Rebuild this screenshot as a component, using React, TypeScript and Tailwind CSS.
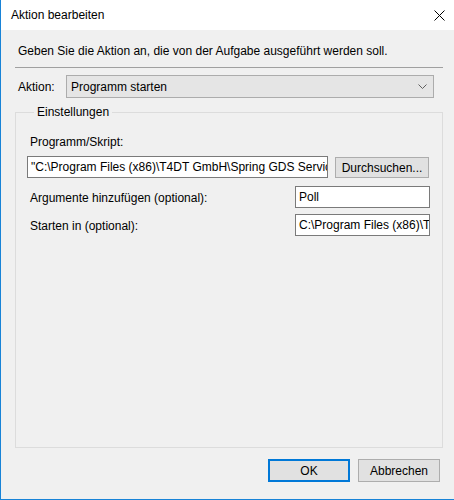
import React from 'react'

const font = { fontFamily: '"Segoe UI", "Liberation Sans", Arial, sans-serif' }

function TextBox({ value, className }: { value: string; className: string }) {
  return (
    <div
      className={`h-[22px] border border-[#7a7a7a] bg-white pl-[3px] flex items-center overflow-hidden whitespace-nowrap text-[12px] text-black ${className}`}
    >
      {value}
    </div>
  )
}

export default function App() {
  return (
    <div
      className="w-[454px] h-[500px] bg-[#f0f0f0] border-l border-b border-[#1883d7] flex flex-col text-[12px] leading-[16px] text-black"
      style={font}
    >
      {/* Title bar */}
      <div className="h-[30px] bg-white flex items-center justify-between pl-[10px] pr-[8px] shrink-0">
        <span className="text-[12px]">Aktion bearbeiten</span>
        <svg width="11" height="11" viewBox="0 0 11 11" className="mr-[1px]">
          <path d="M0.5 0.5 L10.5 10.5 M10.5 0.5 L0.5 10.5" stroke="#000" strokeWidth="1" fill="none" />
        </svg>
      </div>

      <div className="flex-1 flex flex-col pl-[14px] pr-[11px]">
        <div className="mt-[13px] ml-[3px]">Geben Sie die Aktion an, die von der Aufgabe ausgeführt werden soll.</div>

        <div className="mt-[8px] h-[1px] bg-[#a0a0a0]" />

        <div className="mt-[7px] flex items-center">
          <span className="ml-[3px] w-[48px]">Aktion:</span>
          <div className="w-[368px] h-[23px] bg-[#e5e5e5] border border-[#acacac] flex items-center justify-between pl-[4px] pr-[6px]">
            <span>Programm starten</span>
            <svg width="9" height="5" viewBox="0 0 9 5">
              <path d="M0.5 0.5 L4.5 4.5 L8.5 0.5" stroke="#606060" strokeWidth="1" fill="none" />
            </svg>
          </div>
        </div>

        <fieldset className="mt-[6px] h-[344px] border border-[#dcdcdc] px-[11px]">
          <legend className="ml-[7px] px-[3px]">Einstellungen</legend>

          <div className="mt-[14px] ml-[3px]">Programm/Skript:</div>
          <div className="mt-[6px] flex items-end">
            <TextBox className="w-[301px]" value={'"C:\\Program Files (x86)\\T4DT GmbH\\Spring GDS Service\\SpringGDSService.exe"'} />
            <button className="ml-[7px] w-[94px] h-[21px] bg-[#e1e1e1] border border-[#adadad] text-[12px] leading-[16px] flex items-center justify-center">
              Durchsuchen...
            </button>
          </div>

          <div className="mt-[8px] flex items-center justify-between">
            <span className="ml-[3px] mt-[2px]">Argumente hinzufügen (optional):</span>
            <TextBox className="w-[135px] mr-[1px]" value="Poll" />
          </div>

          <div className="mt-[6px] flex items-center justify-between">
            <span className="ml-[3px] mt-[2px]">Starten in (optional):</span>
            <TextBox className="w-[135px] mr-[1px]" value={'C:\\Program Files (x86)\\T4DT GmbH\\Spring GDS Service'} />
          </div>
        </fieldset>

        <div className="mt-[11px] flex justify-end gap-[8px] pr-[3px]">
          <button className="w-[82px] h-[23px] bg-[#e1e1e1] border-2 border-[#0078d7] text-[12px] flex items-center justify-center">
            OK
          </button>
          <button className="w-[82px] h-[23px] bg-[#e1e1e1] border border-[#adadad] text-[12px] flex items-center justify-center">
            Abbrechen
          </button>
        </div>
      </div>
    </div>
  )
}
